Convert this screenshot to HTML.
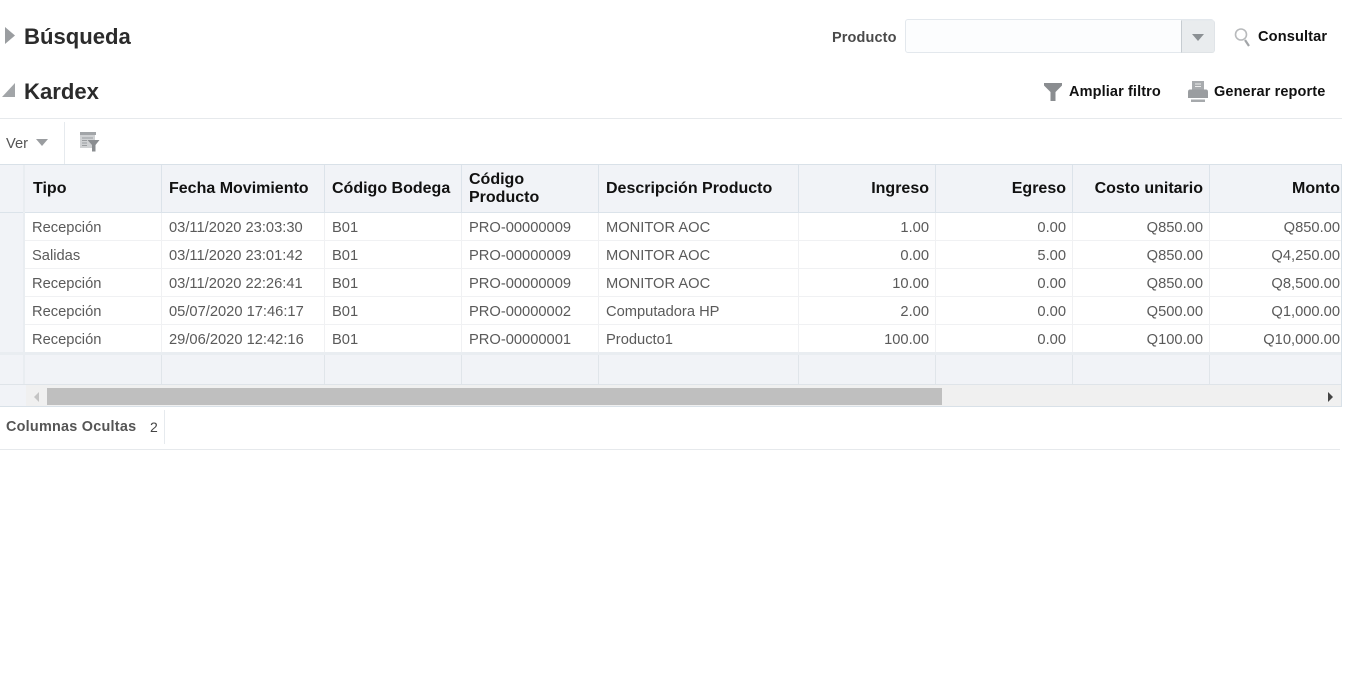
<!DOCTYPE html>
<html lang="es"><head><meta charset="utf-8"><title>Kardex</title>
<style>
html,body{margin:0;padding:0;width:1350px;height:700px;overflow:hidden;background:#fff}
body{position:relative;font-family:"Liberation Sans",sans-serif}
.a{position:absolute}
.t{position:absolute;white-space:nowrap;line-height:18px}
.h1{font-size:22.1px;font-weight:bold;color:#2b2b2b;line-height:26px}
.b{font-size:14.5px;font-weight:bold;color:#111;letter-spacing:.12px}
.th{font-size:16px;font-weight:bold;color:#111}
.td{font-size:14.7px;color:#5a5a5a}
.r{text-align:right}
</style></head><body>

<svg class="a" style="left:0;top:0" width="30" height="100"><path d="M5 27 L15 35.500 L5 44Z" fill="#9a9da0"/><path d="M15 83 V97 H2Z" fill="#a2a5a8"/></svg>
<div class="t h1" style="left:24px;top:24px">Búsqueda</div>
<div class="t h1" style="left:24px;top:79px">Kardex</div>

<div class="t b" style="left:832px;top:29px;color:#4a4a4a">Producto</div>
<div class="a" style="left:905px;top:19px;width:309px;height:34px;box-sizing:border-box;border:1px solid #e3e8ed;border-radius:3px;background:#fcfdfe"></div>
<div class="a" style="left:1181px;top:20px;width:34px;height:33px;box-sizing:border-box;border-left:1px solid #c6ccd1;border-bottom:1px solid #dfe3e6;border-right:1px solid #e0e4e8;border-top:1px solid #e6eaed;background:#e9ecee;border-radius:0 3px 3px 0"></div>
<svg class="a" style="left:1192px;top:33px" width="12" height="9"><path d="M0 1 H12 L6 8Z" fill="#8b9094"/></svg>
<svg class="a" style="left:1232px;top:26px" width="20" height="22" fill="none"><circle cx="9" cy="8.500" r="5.500" stroke="#b8babc" stroke-width="1.600"/><path d="M13 14 L17 20" stroke="#a2a5a8" stroke-width="2.200"/></svg>
<div class="t b" style="left:1258px;top:28px;font-size:14.6px">Consultar</div>

<svg class="a" style="left:1043px;top:82px" width="20" height="20"><path d="M1 1 H19 V3.500 L12.500 10 V19 H7.500 V10 L1 3.500Z" fill="#8a8d90"/></svg>
<div class="t b" style="left:1069px;top:83px">Ampliar filtro</div>
<svg class="a" style="left:1187px;top:81px" width="22" height="21"><path d="M5 0 H17 V9 H5Z" fill="#a8abae"/><path d="M8 3 H14 M8 5.500 H14" stroke="#ececec" stroke-width="1"/><path d="M1 11 Q1 8.500 3 8.500 H19 Q21 8.500 21 11 V17 H1Z" fill="#9a9da0"/><path d="M4 18.500 H18 V21 H4Z" fill="#a6a9ac"/></svg>
<div class="t b" style="left:1214px;top:83px">Generar reporte</div>

<div class="a" style="left:0;top:118px;width:1342px;height:1px;background:#e6e9ec"></div>

<div class="t" style="left:6px;top:135px;font-size:14.7px;color:#555">Ver</div>
<svg class="a" style="left:36px;top:138px" width="12" height="9"><path d="M0 1 H12 L6 8Z" fill="#9a9da0"/></svg>
<div class="a" style="left:64px;top:122px;width:1px;height:42px;background:#e6eaee"></div>
<svg class="a" style="left:80px;top:132px" width="20" height="20"><path d="M0 0 H16 V3 H0Z" fill="#a2a5a8"/><path d="M0 3 H15 V16 H0Z" fill="#cfd1d3"/><path d="M2 6 H13 M2 8.500 H7 M2 11 H7 M2 13.500 H7" stroke="#9a9da0" stroke-width="1"/><path d="M7.500 8 H19.500 L15.500 13 V19.500 H12 V13Z" fill="#8a8d90"/></svg>

<!-- Table frame -->
<div class="a" style="left:0;top:164px;width:1342px;height:243px;box-sizing:border-box;border-top:1px solid #d9e1e8;border-bottom:1px solid #d9e1e8;border-right:1px solid #d9e1e8;background:#fff"></div>
<div class="a" style="left:0;top:165px;width:1341px;height:47px;background:#f1f3f7"></div>
<div class="a" style="left:0;top:212px;width:1341px;height:1px;background:#dbe3ea"></div>
<div class="a" style="left:0;top:213px;width:24px;height:140px;background:#f1f3f7"></div>
<div class="a" style="left:23px;top:165px;width:2px;height:188px;background:#e9edf1"></div>

<div class="a" style="left:25px;top:240px;width:1316px;height:1px;background:#f0f1f3"></div>
<div class="a" style="left:25px;top:268px;width:1316px;height:1px;background:#f0f1f3"></div>
<div class="a" style="left:25px;top:296px;width:1316px;height:1px;background:#f0f1f3"></div>
<div class="a" style="left:25px;top:324px;width:1316px;height:1px;background:#f0f1f3"></div>

<!-- footer row -->
<div class="a" style="left:0;top:352px;width:1341px;height:3px;background:#e9edf1"></div>
<div class="a" style="left:0;top:355px;width:1341px;height:29px;background:#f1f3f7"></div>
<div class="a" style="left:0;top:384px;width:1341px;height:1px;background:#dfe4e9"></div>
<div class="a" style="left:23px;top:355px;width:2px;height:29px;background:#e9edf1"></div>

<!-- column lines header -->
<div class="a" style="left:161px;top:165px;width:1px;height:47px;background:#dce3ea"></div>
<div class="a" style="left:324px;top:165px;width:1px;height:47px;background:#dce3ea"></div>
<div class="a" style="left:461px;top:165px;width:1px;height:47px;background:#dce3ea"></div>
<div class="a" style="left:598px;top:165px;width:1px;height:47px;background:#dce3ea"></div>
<div class="a" style="left:798px;top:165px;width:1px;height:47px;background:#dce3ea"></div>
<div class="a" style="left:935px;top:165px;width:1px;height:47px;background:#dce3ea"></div>
<div class="a" style="left:1072px;top:165px;width:1px;height:47px;background:#dce3ea"></div>
<div class="a" style="left:1209px;top:165px;width:1px;height:47px;background:#dce3ea"></div>
<!-- column lines body -->
<div class="a" style="left:161px;top:213px;width:1px;height:139px;background:#f0f1f3"></div>
<div class="a" style="left:324px;top:213px;width:1px;height:139px;background:#f0f1f3"></div>
<div class="a" style="left:461px;top:213px;width:1px;height:139px;background:#f0f1f3"></div>
<div class="a" style="left:598px;top:213px;width:1px;height:139px;background:#f0f1f3"></div>
<div class="a" style="left:798px;top:213px;width:1px;height:139px;background:#f0f1f3"></div>
<div class="a" style="left:935px;top:213px;width:1px;height:139px;background:#f0f1f3"></div>
<div class="a" style="left:1072px;top:213px;width:1px;height:139px;background:#f0f1f3"></div>
<div class="a" style="left:1209px;top:213px;width:1px;height:139px;background:#f0f1f3"></div>
<!-- column lines footer -->
<div class="a" style="left:161px;top:355px;width:1px;height:29px;background:#e0e5ea"></div>
<div class="a" style="left:324px;top:355px;width:1px;height:29px;background:#e0e5ea"></div>
<div class="a" style="left:461px;top:355px;width:1px;height:29px;background:#e0e5ea"></div>
<div class="a" style="left:598px;top:355px;width:1px;height:29px;background:#e0e5ea"></div>
<div class="a" style="left:798px;top:355px;width:1px;height:29px;background:#e0e5ea"></div>
<div class="a" style="left:935px;top:355px;width:1px;height:29px;background:#e0e5ea"></div>
<div class="a" style="left:1072px;top:355px;width:1px;height:29px;background:#e0e5ea"></div>
<div class="a" style="left:1209px;top:355px;width:1px;height:29px;background:#e0e5ea"></div>

<!-- header text -->
<div class="t th" style="left:33px;top:180px">Tipo</div>
<div class="t th" style="left:169px;top:180px">Fecha Movimiento</div>
<div class="t th" style="left:332px;top:180px">Código Bodega</div>
<div class="t th" style="left:469px;top:171px">Código</div>
<div class="t th" style="left:469px;top:189px">Producto</div>
<div class="t th" style="left:606px;top:180px">Descripción Producto</div>
<div class="t th r" style="right:421px;top:180px">Ingreso</div>
<div class="t th r" style="right:284px;top:180px">Egreso</div>
<div class="t th r" style="right:147px;top:180px">Costo unitario</div>
<div class="t th r" style="right:10px;top:180px">Monto</div>

<!-- row 1 -->
<div class="t td" style="left:32px;top:219px">Recepción</div>
<div class="t td" style="left:169px;top:219px">03/11/2020 23:03:30</div>
<div class="t td" style="left:332px;top:219px">B01</div>
<div class="t td" style="left:469px;top:219px">PRO-00000009</div>
<div class="t td" style="left:606px;top:219px">MONITOR AOC</div>
<div class="t td r" style="right:421px;top:219px">1.00</div>
<div class="t td r" style="right:284px;top:219px">0.00</div>
<div class="t td r" style="right:147px;top:219px">Q850.00</div>
<div class="t td r" style="right:10px;top:219px">Q850.00</div>
<!-- row 2 -->
<div class="t td" style="left:32px;top:247px">Salidas</div>
<div class="t td" style="left:169px;top:247px">03/11/2020 23:01:42</div>
<div class="t td" style="left:332px;top:247px">B01</div>
<div class="t td" style="left:469px;top:247px">PRO-00000009</div>
<div class="t td" style="left:606px;top:247px">MONITOR AOC</div>
<div class="t td r" style="right:421px;top:247px">0.00</div>
<div class="t td r" style="right:284px;top:247px">5.00</div>
<div class="t td r" style="right:147px;top:247px">Q850.00</div>
<div class="t td r" style="right:10px;top:247px">Q4,250.00</div>
<!-- row 3 -->
<div class="t td" style="left:32px;top:275px">Recepción</div>
<div class="t td" style="left:169px;top:275px">03/11/2020 22:26:41</div>
<div class="t td" style="left:332px;top:275px">B01</div>
<div class="t td" style="left:469px;top:275px">PRO-00000009</div>
<div class="t td" style="left:606px;top:275px">MONITOR AOC</div>
<div class="t td r" style="right:421px;top:275px">10.00</div>
<div class="t td r" style="right:284px;top:275px">0.00</div>
<div class="t td r" style="right:147px;top:275px">Q850.00</div>
<div class="t td r" style="right:10px;top:275px">Q8,500.00</div>
<!-- row 4 -->
<div class="t td" style="left:32px;top:303px">Recepción</div>
<div class="t td" style="left:169px;top:303px">05/07/2020 17:46:17</div>
<div class="t td" style="left:332px;top:303px">B01</div>
<div class="t td" style="left:469px;top:303px">PRO-00000002</div>
<div class="t td" style="left:606px;top:303px">Computadora HP</div>
<div class="t td r" style="right:421px;top:303px">2.00</div>
<div class="t td r" style="right:284px;top:303px">0.00</div>
<div class="t td r" style="right:147px;top:303px">Q500.00</div>
<div class="t td r" style="right:10px;top:303px">Q1,000.00</div>
<!-- row 5 -->
<div class="t td" style="left:32px;top:331px">Recepción</div>
<div class="t td" style="left:169px;top:331px">29/06/2020 12:42:16</div>
<div class="t td" style="left:332px;top:331px">B01</div>
<div class="t td" style="left:469px;top:331px">PRO-00000001</div>
<div class="t td" style="left:606px;top:331px">Producto1</div>
<div class="t td r" style="right:421px;top:331px">100.00</div>
<div class="t td r" style="right:284px;top:331px">0.00</div>
<div class="t td r" style="right:147px;top:331px">Q100.00</div>
<div class="t td r" style="right:10px;top:331px">Q10,000.00</div>

<!-- scrollbar -->
<div class="a" style="left:0;top:385px;width:26px;height:21px;background:#f1f3f7"></div>
<div class="a" style="left:26px;top:385px;width:1315px;height:21px;background:#f0f0f0"></div>
<div class="a" style="left:47px;top:388px;width:895px;height:17px;background:#bfbfbf"></div>
<svg class="a" style="left:32px;top:391px" width="10" height="12"><path d="M7 1 V11 L2 6Z" fill="#c4c4c4"/></svg>
<svg class="a" style="left:1326px;top:391px" width="10" height="12"><path d="M2 1 V11 L7 6Z" fill="#444"/></svg>

<div class="t" style="left:6px;top:418px;font-size:14.4px;font-weight:bold;color:#555;letter-spacing:.25px">Columnas Ocultas</div>
<div class="t" style="left:150px;top:418px;font-size:14px;color:#444">2</div>
<div class="a" style="left:164px;top:410px;width:1px;height:34px;background:#e6eaee"></div>
<div class="a" style="left:0;top:449px;width:1340px;height:1px;background:#e6e9ec"></div>
</body></html>
